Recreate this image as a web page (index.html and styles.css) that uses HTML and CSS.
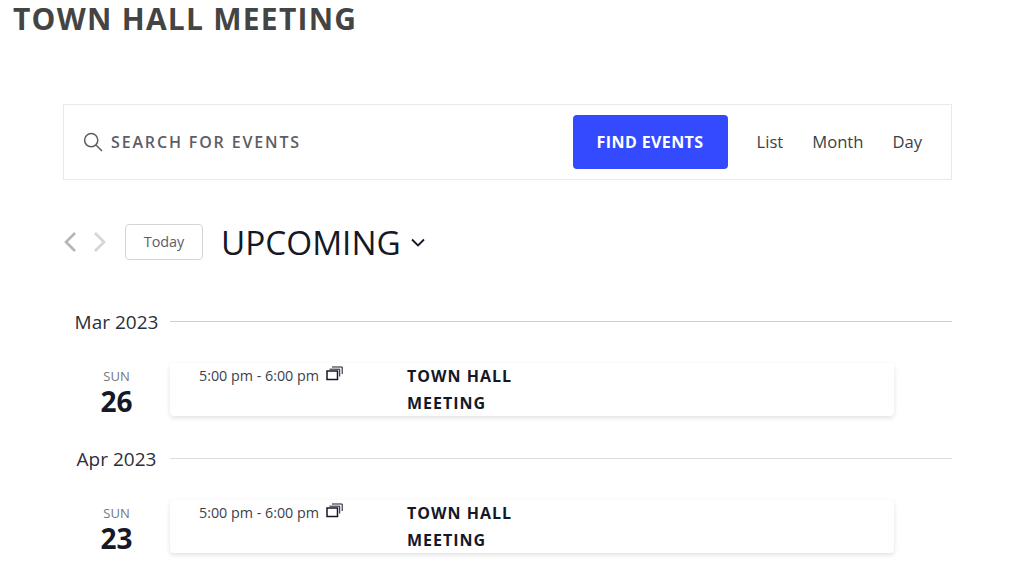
FILE: index.html
```html
<!DOCTYPE html>
<html lang="en">
<head>
    <meta charset="UTF-8">
    <title>Town Hall Meeting</title>
    <link rel="stylesheet" href="styles.css">
</head>
<body>
    <h1 class="page-title">TOWN HALL MEETING</h1>

    <div class="events">
        <div class="search-bar">
            <div class="search-field">
                <svg class="search-icon" width="20" height="20" viewBox="0 0 20 20" fill="none" stroke="#5d5d66" stroke-width="1.5">
                    <circle cx="8.2" cy="8.2" r="6.6"/>
                    <path d="M13 13l6 6"/>
                </svg>
                <span>SEARCH FOR EVENTS</span>
            </div>
            <button class="find-btn">FIND EVENTS</button>
            <div class="views">
                <span>List</span>
                <span>Month</span>
                <span>Day</span>
            </div>
        </div>

        <div class="nav-row">
            <svg class="arrow" width="14" height="22" viewBox="0 0 14 22" fill="none" stroke="#b5b5b5" stroke-width="2.6">
                <path d="M12 2L3 11l9 9"/>
            </svg>
            <svg class="arrow arrow-next" width="14" height="22" viewBox="0 0 14 22" fill="none" stroke="#d5d5d5" stroke-width="2.6">
                <path d="M2 2l9 9-9 9"/>
            </svg>
            <button class="today-btn">Today</button>
            <span class="upcoming">UPCOMING</span>
            <svg class="caret" width="14" height="9" viewBox="0 0 14 9" fill="none" stroke="#141827" stroke-width="1.8">
                <path d="M1 1.5l6 6 6-6"/>
            </svg>
        </div>

        <div class="month-row">
            <span class="month-label">Mar 2023</span>
            <div class="month-line"></div>
        </div>
        <div class="event-row">
            <div class="event-date">
                <span class="weekday">SUN</span>
                <span class="day-num">26</span>
            </div>
            <div class="event-card">
                <div class="event-time">
                    5:00 pm - 6:00 pm
                    <svg class="recur" width="17" height="15" viewBox="0 0 17 15" fill="none" stroke="#141827">
                        <rect x="1" y="5" width="10.5" height="8.5" stroke-width="1.5"/>
                        <path d="M3.5 3.2h10.2v7.3M6 1h10.2v7" stroke-width="1"/>
                    </svg>
                </div>
                <div class="event-title">TOWN HALL MEETING</div>
            </div>
        </div>

        <div class="month-row month-row-apr">
            <span class="month-label">Apr 2023</span>
            <div class="month-line"></div>
        </div>
        <div class="event-row">
            <div class="event-date">
                <span class="weekday">SUN</span>
                <span class="day-num">23</span>
            </div>
            <div class="event-card">
                <div class="event-time">
                    5:00 pm - 6:00 pm
                    <svg class="recur" width="17" height="15" viewBox="0 0 17 15" fill="none" stroke="#141827">
                        <rect x="1" y="5" width="10.5" height="8.5" stroke-width="1.5"/>
                        <path d="M3.5 3.2h10.2v7.3M6 1h10.2v7" stroke-width="1"/>
                    </svg>
                </div>
                <div class="event-title">TOWN HALL MEETING</div>
            </div>
        </div>
    </div>
</body>
</html>
```

FILE: styles.css
```css
* {
    margin: 0;
    padding: 0;
    box-sizing: border-box;
}

body {
    font-family: 'Open Sans', sans-serif;
    background: #fff;
    color: #141827;
    height: 579px;
    overflow: hidden;
}

.page-title {
    font-size: 30px;
    line-height: 38px;
    font-weight: 700;
    letter-spacing: 1.25px;
    color: #444;
    padding-left: 13px;
}

.events {
    margin: 66px 72px 0 63px;
}

.search-bar {
    display: flex;
    align-items: center;
    height: 76px;
    border: 1px solid #e8e9eb;
    padding: 0 29px 0 19px;
}

.search-field {
    flex: 1;
    display: flex;
    align-items: center;
    gap: 8px;
    font-size: 16px;
    font-weight: 600;
    letter-spacing: 1.85px;
    color: #5d5d66;
}

.find-btn {
    width: 155px;
    height: 54px;
    border: none;
    border-radius: 4px;
    background: #334aff;
    color: #fff;
    font-family: inherit;
    font-size: 16px;
    font-weight: 700;
    letter-spacing: 0.4px;
}

.views {
    display: flex;
    gap: 29px;
    margin-left: 29px;
    padding-bottom: 2px;
    font-size: 16.6px;
    color: #3a3f4b;
}

.nav-row {
    display: flex;
    align-items: center;
    height: 36px;
    margin-top: 44px;
}

.arrow-next {
    margin-left: 16px;
}

.today-btn {
    width: 78px;
    height: 36px;
    margin-left: 18px;
    padding-bottom: 2px;
    border: 1px solid #d5d5d5;
    border-radius: 4px;
    background: #fff;
    color: #5d5d66;
    font-family: inherit;
    font-size: 14.4px;
}

.upcoming {
    margin-left: 18px;
    font-size: 33.3px;
    line-height: 36px;
    color: #141827;
}

.caret {
    margin-left: 10px;
}

.month-row {
    display: flex;
    align-items: center;
    height: 24px;
    margin-top: 49px;
}

.month-row-apr {
    margin-top: 28px;
}

.month-label {
    width: 107px;
    padding-top: 2px;
    text-align: center;
    font-size: 19px;
    line-height: 26px;
    color: #2b2f3a;
}

.month-line {
    flex: 1;
    height: 1px;
    background: #cfcfcf;
}

.month-row-apr .month-line {
    background: #dedede;
}

.event-row {
    display: flex;
    margin-top: 30px;
}

.event-date {
    width: 107px;
    display: flex;
    flex-direction: column;
    align-items: center;
}

.weekday {
    font-size: 13px;
    line-height: 16px;
    margin-top: 5px;
    color: #74777e;
}

.day-num {
    font-size: 28px;
    line-height: 34px;
    font-weight: 700;
    color: #141827;
}

.event-card {
    width: 724px;
    height: 53px;
    display: flex;
    padding-left: 29px;
    border-radius: 4px;
    background: #fff;
    box-shadow: 0 2px 5px rgba(0, 0, 0, 0.12);
}

.event-time {
    width: 208px;
    font-size: 14.3px;
    line-height: 26px;
    color: #3a3f4b;
    white-space: nowrap;
}

.recur {
    margin-left: 3px;
}

.event-title {
    width: 130px;
    font-size: 16px;
    line-height: 27px;
    font-weight: 700;
    letter-spacing: 1px;
    color: #141827;
}
```
